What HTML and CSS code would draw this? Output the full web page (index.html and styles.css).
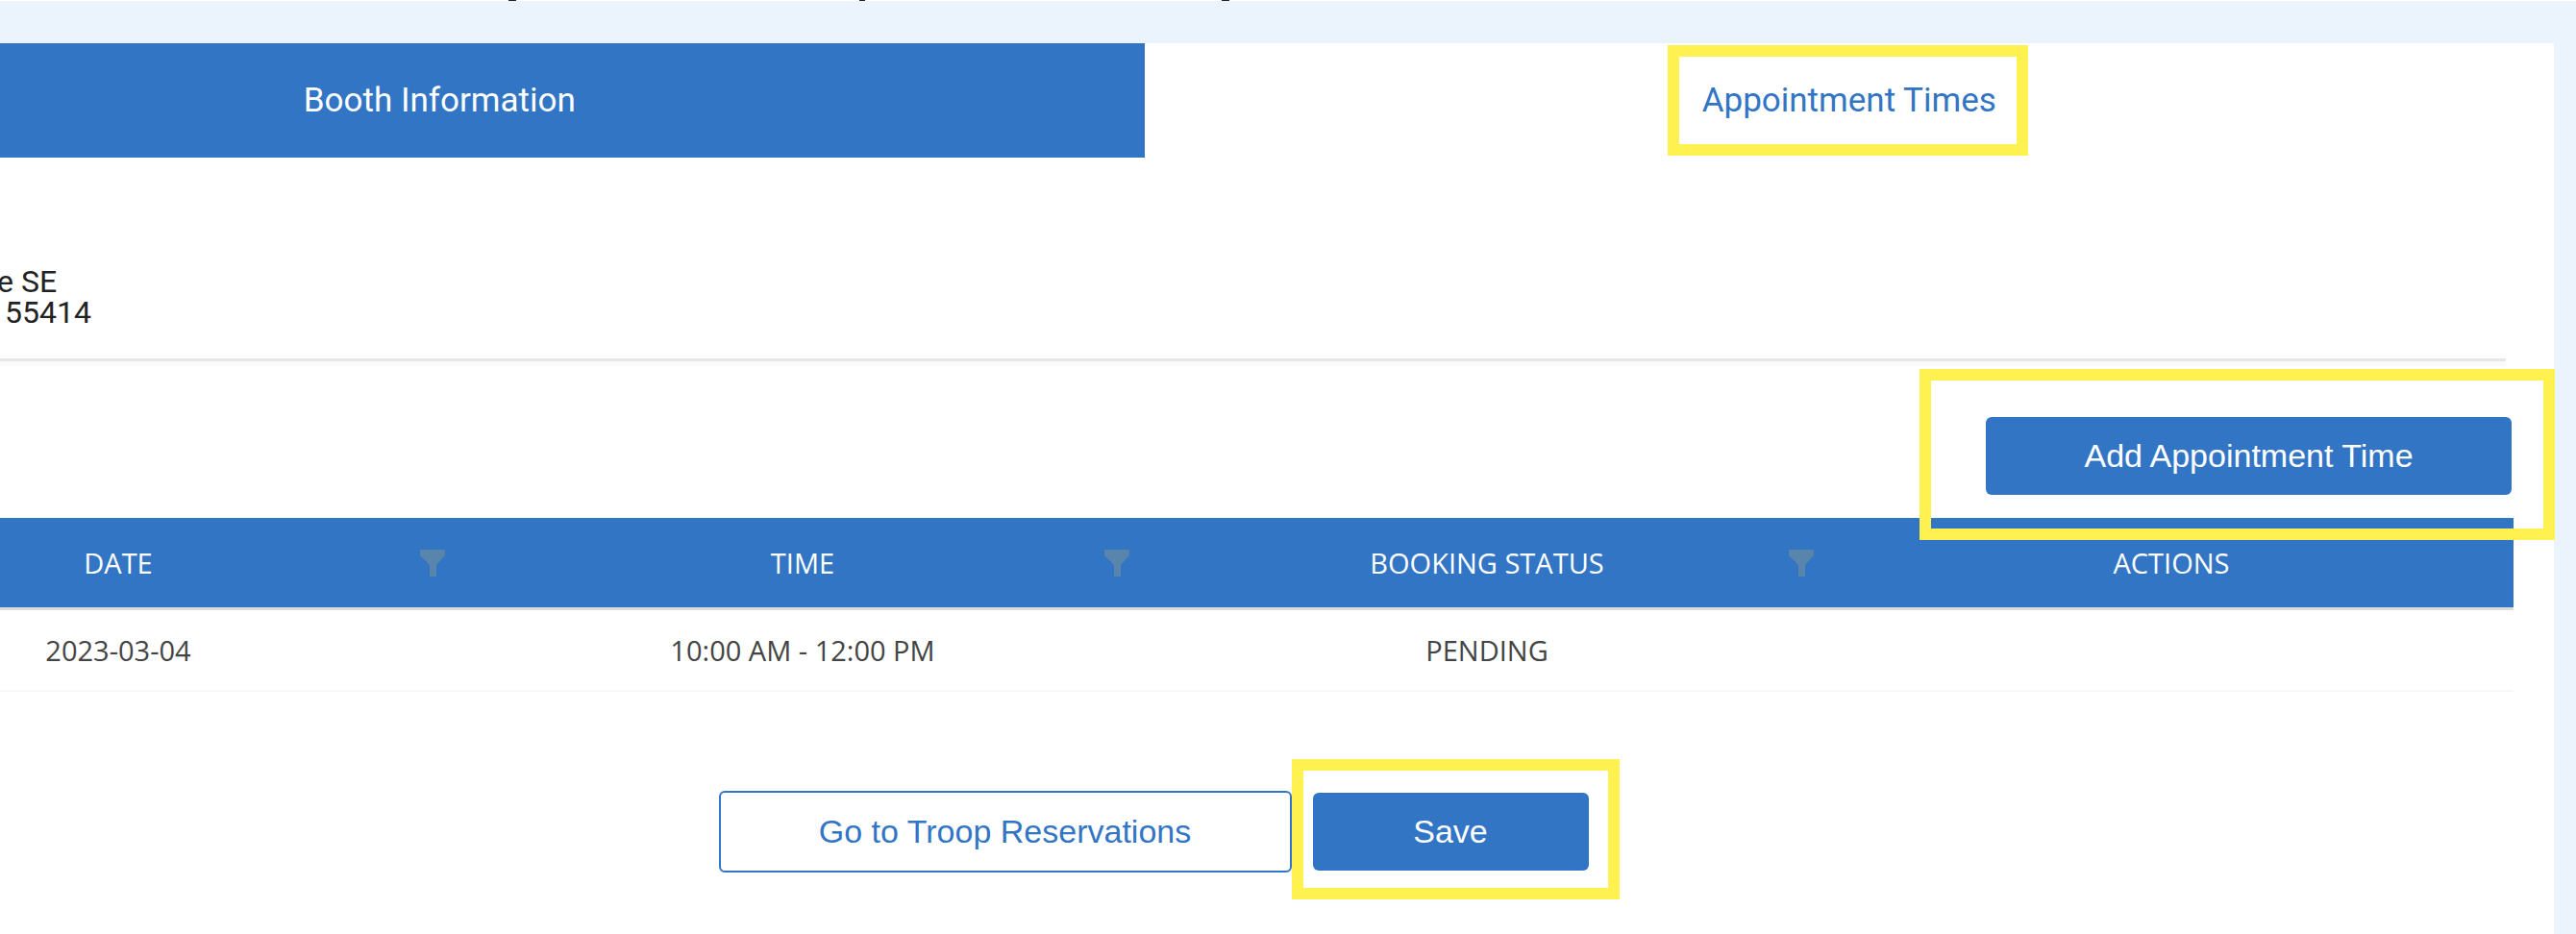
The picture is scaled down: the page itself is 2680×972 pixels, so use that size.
FILE: index.html
```html
<!DOCTYPE html>
<html lang="en">
<head>
    <meta charset="UTF-8">
    <title>Appointment Times</title>
    <link rel="stylesheet" href="styles.css">
</head>
<body>
    <!-- Bottom edge of the intro line above the panel -->
    <div class="intro"><svg width="1290" height="1" aria-hidden="true"><path d="M529 0h8v1h-8zM894 0h6v1h-6zM1271 0h8v1h-8z" fill="#222"/></svg></div>

    <main class="panel">
        <nav class="tabs">
            <button class="tab active">Booth Information</button>
            <button class="tab"><span class="highlight highlight-tab">Appointment Times</span></button>
        </nav>

        <div class="content">
            <address class="address">e SE<br>&nbsp;55414</address>

            <div class="toolbar">
                <button class="btn btn-add highlight highlight-add">Add Appointment Time</button>
            </div>

            <table class="times">
                <thead>
                    <tr>
                        <th>
                            <div class="head">
                                <span class="title">DATE</span>
                                <button class="filter" aria-label="Filter date"><svg viewBox="0 0 26 28"><path d="M0 0h26v6l-9 10v12H10V16L0 6z"/></svg></button>
                            </div>
                        </th>
                        <th>
                            <div class="head">
                                <span class="title">TIME</span>
                                <button class="filter" aria-label="Filter time"><svg viewBox="0 0 26 28"><path d="M0 0h26v6l-9 10v12H10V16L0 6z"/></svg></button>
                            </div>
                        </th>
                        <th>
                            <div class="head">
                                <span class="title">BOOKING STATUS</span>
                                <button class="filter" aria-label="Filter booking status"><svg viewBox="0 0 26 28"><path d="M0 0h26v6l-9 10v12H10V16L0 6z"/></svg></button>
                            </div>
                        </th>
                        <th>
                            <div class="head">
                                <span class="title">ACTIONS</span>
                            </div>
                        </th>
                    </tr>
                </thead>
                <tbody>
                    <tr>
                        <td>2023-03-04</td>
                        <td>10:00 AM - 12:00 PM</td>
                        <td>PENDING</td>
                        <td></td>
                    </tr>
                </tbody>
            </table>

            <div class="actions">
                <button class="btn btn-outline">Go to Troop Reservations</button>
                <button class="btn btn-save highlight highlight-save">Save</button>
            </div>
        </div>
    </main>
</body>
</html>
```
FILE: styles.css
```css
* {
    box-sizing: border-box;
}
body {
    font-family: Roboto, sans-serif;
    margin: 0;
    min-height: 100vh;
    display: flex;
    flex-direction: column;
    background: #ebf3fd;
    overflow: hidden;
}
button {
    border: none;
    cursor: pointer;
}
.intro {
    height: 1px;
    margin-bottom: 44px;
    background: white;
}
.intro svg {
    display: block;
}

/* The panel is scrolled left, past the edge of the window */
.panel {
    flex: 1;
    margin-left: -276px;
    margin-right: 23px;
    background: white;
}
.tabs {
    display: grid;
    grid-template-columns: 1fr 1fr;
}
.tab {
    height: 119px;
    background: white;
    color: #3275c4;
    font-family: Roboto, sans-serif;
    font-size: 35px;
}
.tab.active {
    background: #3275c4;
    color: white;
}
.content {
    padding: 113px 42px 0 43px;
}
.address {
    margin-right: 8px;
    padding: 0 0 32px 230px;
    border-bottom: 3px solid #e6e6e6;
    box-shadow: 0 5px 0 #fafafa;
    color: #222;
    font-size: 32px;
    font-style: normal;
    line-height: 32px;
}
.toolbar {
    display: flex;
    justify-content: flex-end;
    padding: 58px 2px 24px 0;
}
.btn {
    height: 81px;
    border-radius: 6px;
    background: #3275c4;
    color: white;
    font-family: "Liberation Sans", Arial, sans-serif;
    font-size: 34px;
}
.btn-add {
    width: 547px;
}
.btn-outline {
    width: 596px;
    height: 85px;
    border: 2px solid #3275c4;
    background: white;
    color: #3275c4;
}
.btn-save {
    width: 287px;
}

.times {
    width: 100%;
    border-collapse: collapse;
    table-layout: fixed;
    font-family: "Open Sans", "Segoe UI", sans-serif;
    font-size: 29px;
}
.times thead {
    background: #3275c4;
    box-shadow: 0 3px 0 #dcdcdc;
}
.times th {
    height: 93px;
    padding: 0 16px;
    color: white;
    font-weight: normal;
}
.times td {
    height: 87px;
    padding: 2px 16px 0;
    border-bottom: 2px solid #f7f7f7;
    color: #444;
    text-align: center;
}
.head {
    display: grid;
    grid-template-columns: 1fr auto 1fr;
    align-items: center;
}
.title {
    grid-column: 2;
}
.filter {
    justify-self: end;
    padding: 0;
    background: none;
}
.filter svg {
    display: block;
    width: 26px;
    height: 28px;
    fill: #5984ac;
}

.actions {
    display: flex;
    justify-content: center;
    align-items: center;
    padding: 103px 4px 0 0;
}
.actions .btn {
    margin-left: 22px;
}

/* Yellow frames that point at the next step */
.highlight {
    position: relative;
}
.highlight::after {
    content: "";
    position: absolute;
    border: 12px solid #fff150;
    pointer-events: none;
}
.highlight-tab::after {
    inset: -37px -33px -37px -36px;
}
.highlight-add::after {
    inset: -50px -45px -47px -69px;
}
.highlight-save::after {
    inset: -35px -32px -30px -22px;
}
```
